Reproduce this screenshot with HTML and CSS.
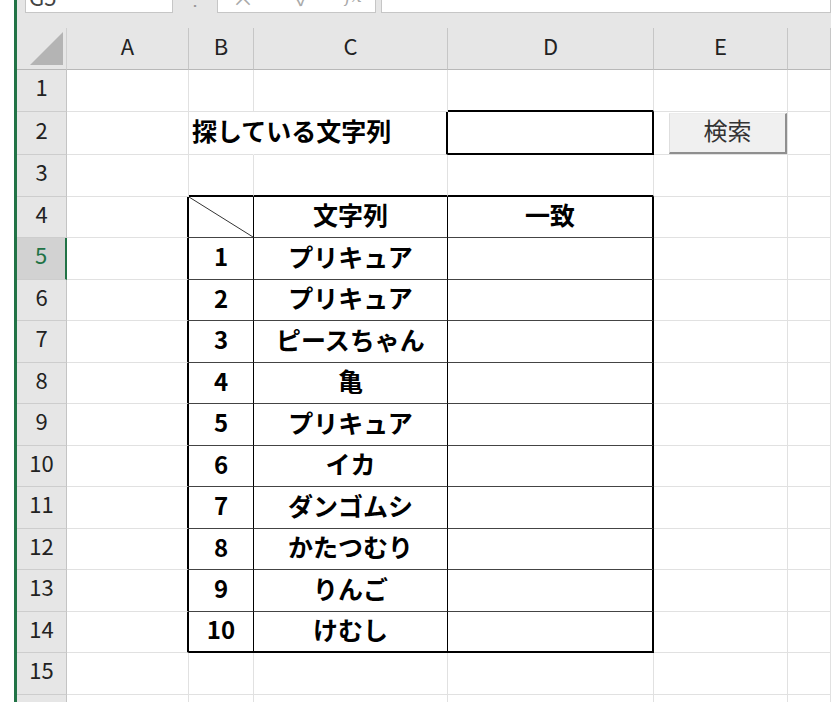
FILE: index.html
```html
<!DOCTYPE html>
<html lang="ja">
<head>
<meta charset="utf-8">
<title>Sheet</title>
<link rel="stylesheet" href="styles.css">
</head>
<body>
<div class="app">
  <div class="edge"></div>
  <div class="accent"></div>
  <div class="main">
    <div class="fbar">
      <div class="box namebox"><span class="clip g5">G5</span></div>
      <div class="sep"><span class="clip dots">⋮</span></div>
      <div class="box fxbox"><span class="clip mark x">×</span><span class="clip mark ck">✓</span><span class="clip mark fx">fx</span></div>
      <div class="box input"></div>
    </div>
    <div class="strip"></div>
    <div class="sheet">
      <div class="corner"><svg class="tri" width="49" height="41" viewBox="0 0 49 41"><polygon points="13,37 46,37 46,4" fill="#b4b4b4"/></svg></div>
      <div class="ch">A</div><div class="ch">B</div><div class="ch">C</div><div class="ch">D</div><div class="ch">E</div><div class="ch"></div>

      <div class="rh">1</div><div class="c"></div><div class="c"></div><div class="c"></div><div class="c dtop"></div><div class="c"></div><div class="c"></div>

      <div class="rh">2</div><div class="c"></div><div class="c lbl">探している文字列</div><div class="c clear cin"></div><div class="c inbox"></div><div class="c btncell"><div class="btn">検索</div></div><div class="c"></div>

      <div class="rh">3</div><div class="c"></div><div class="c top"></div><div class="c top"></div><div class="c top"></div><div class="c"></div><div class="c"></div>

      <div class="rh">4</div><div class="c tA"></div><div class="c tb diag"><svg class="dl" viewBox="0 0 64 40" preserveAspectRatio="none"><line x1="0" y1="0" x2="64" y2="40" stroke="#333" stroke-width="1" vector-effect="non-scaling-stroke"/></svg></div><div class="c tb">文字列</div><div class="c td">一致</div><div class="c"></div><div class="c"></div>

      <div class="rh sel">5</div><div class="c tA"></div><div class="c tb num">1</div><div class="c tb">プリキュア</div><div class="c td"></div><div class="c"></div><div class="c"></div>

      <div class="rh">6</div><div class="c tA"></div><div class="c tb num">2</div><div class="c tb">プリキュア</div><div class="c td"></div><div class="c"></div><div class="c"></div>

      <div class="rh">7</div><div class="c tA"></div><div class="c tb num">3</div><div class="c tb">ピースちゃん</div><div class="c td"></div><div class="c"></div><div class="c"></div>

      <div class="rh">8</div><div class="c tA"></div><div class="c tb num">4</div><div class="c tb">亀</div><div class="c td"></div><div class="c"></div><div class="c"></div>

      <div class="rh">9</div><div class="c tA"></div><div class="c tb num">5</div><div class="c tb">プリキュア</div><div class="c td"></div><div class="c"></div><div class="c"></div>

      <div class="rh">10</div><div class="c tA"></div><div class="c tb num">6</div><div class="c tb">イカ</div><div class="c td"></div><div class="c"></div><div class="c"></div>

      <div class="rh">11</div><div class="c tA"></div><div class="c tb num">7</div><div class="c tb">ダンゴムシ</div><div class="c td"></div><div class="c"></div><div class="c"></div>

      <div class="rh">12</div><div class="c tA"></div><div class="c tb num">8</div><div class="c tb">かたつむり</div><div class="c td"></div><div class="c"></div><div class="c"></div>

      <div class="rh">13</div><div class="c tA"></div><div class="c tb num">9</div><div class="c tb">りんご</div><div class="c td"></div><div class="c"></div><div class="c"></div>

      <div class="rh">14</div><div class="c tA"></div><div class="c tb num last">10</div><div class="c tb last">けむし</div><div class="c td last"></div><div class="c"></div><div class="c"></div>

      <div class="rh">15</div><div class="c"></div><div class="c"></div><div class="c"></div><div class="c"></div><div class="c"></div><div class="c"></div>

      <div class="rh"></div><div class="c"></div><div class="c"></div><div class="c"></div><div class="c"></div><div class="c"></div><div class="c"></div>
    </div>
  </div>
</div>
</body>
</html>
```
FILE: styles.css
```css
* { box-sizing: border-box; }
html, body { margin: 0; padding: 0; }
body {
  width: 831px;
  height: 702px;
  overflow: hidden;
  background: #fff;
  font-family: "Noto Sans CJK JP", "Noto Sans", sans-serif;
}
.app { display: flex; height: 702px; }
.edge { width: 14px; flex: none; background: #fff; }
.accent { width: 3px; flex: none; background: #217346; }
.main {
  flex: 1;
  min-width: 0;
  display: flex;
  flex-direction: column;
  background: #e6e6e6;
}
.fbar { height: 13px; flex: none; display: flex; padding-left: 8px; }
.box {
  background: #fff;
  border: 1px solid #c6c6c6;
  border-top: 0;
  overflow: hidden;
  display: flex;
  align-items: flex-end;
}
.namebox { width: 148px; padding-left: 3px; }
.sep { width: 44px; display: flex; justify-content: center; align-items: flex-end; overflow: hidden; }
.fxbox { width: 159px; }
.input { flex: 1; margin-left: 5px; }
.clip { line-height: 24px; font-size: 22px; margin-bottom: 4px; white-space: nowrap; }
.g5 { color: #444; }
.dots { color: #999; font-size: 20px; }
.mark { color: #aaa; }
.x { margin-left: 14px; }
.ck { margin-left: 42px; }
.fx { margin-left: 34px; font-style: italic; font-family: "DejaVu Serif", serif; font-size: 18px; }
.strip { height: 15px; flex: none; }
.sheet {
  flex: 1;
  display: grid;
  grid-template-columns: 50px 122px 65px 194px 206px 134px 1fr;
  grid-template-rows: 42px 42px 43px 42px 41px 42px 41px 42px 41px 42px 41px 42px 41px 42px 41px 42px 1fr;
  background: #fff;
}
.corner {
  background: #e6e6e6;
  border-right: 1px solid #d0d0d0;
  border-bottom: 1px solid #b8b8b8;
}
.tri { display: block; }
.ch {
  background: #e6e6e6;
  border-right: 1px solid #c6c6c6;
  border-bottom: 1px solid #b8b8b8;
  display: flex;
  align-items: center;
  justify-content: center;
  padding-bottom: 8px;
  font-size: 22px;
  color: #222;
}
.rh {
  background: #e6e6e6;
  border-right: 1px solid #c4c4c4;
  border-bottom: 1px solid #cdcdcd;
  display: flex;
  align-items: center;
  justify-content: center;
  padding-bottom: 9px;
  font-size: 22px;
  color: #222;
}
.rh.sel { background: #d2d2d2; color: #217346; border-right: 2px solid #217346; }
.c {
  background: #fff;
  border-right: 1px solid #e1e1e1;
  border-bottom: 1px solid #e1e1e1;
  display: flex;
  align-items: center;
  justify-content: center;
  padding-bottom: 6px;
  font-weight: 700;
  font-size: 25px;
  color: #000;
  white-space: nowrap;
  min-width: 0;
}
.num { font-size: 24px; }
.lbl { justify-content: flex-start; padding-left: 3px; border-right-color: #fff; overflow: visible; }
.clear { background: transparent; }
.cin { border-right: 2px solid #000; }
.dtop { border-bottom: 2px solid #000; }
.inbox { border-right: 2px solid #000; border-bottom: 2px solid #000; }
.btncell { align-items: flex-start; justify-content: flex-start; padding: 1px 0 0 15px; }
.btn {
  width: 118px;
  height: 41px;
  background: #f0f0f0;
  border-top: 1px solid #ececec;
  border-left: 1px solid #dedede;
  border-right: 2px solid #8f8f8f;
  border-bottom: 2px solid #8f8f8f;
  display: flex;
  align-items: center;
  justify-content: center;
  padding-bottom: 8px;
  font-weight: 400;
  font-size: 24px;
  color: #333;
}
.top { border-bottom: 2px solid #000; }
.tA { border-right: 2px solid #000; }
.tb { border-right: 1px solid #000; border-bottom: 1px solid #444; }
.td { border-right: 2px solid #000; border-bottom: 1px solid #444; }
.last { border-bottom: 2px solid #000; }
.diag { padding: 0; align-items: stretch; }
.dl { display: block; width: 100%; height: 100%; }
```
